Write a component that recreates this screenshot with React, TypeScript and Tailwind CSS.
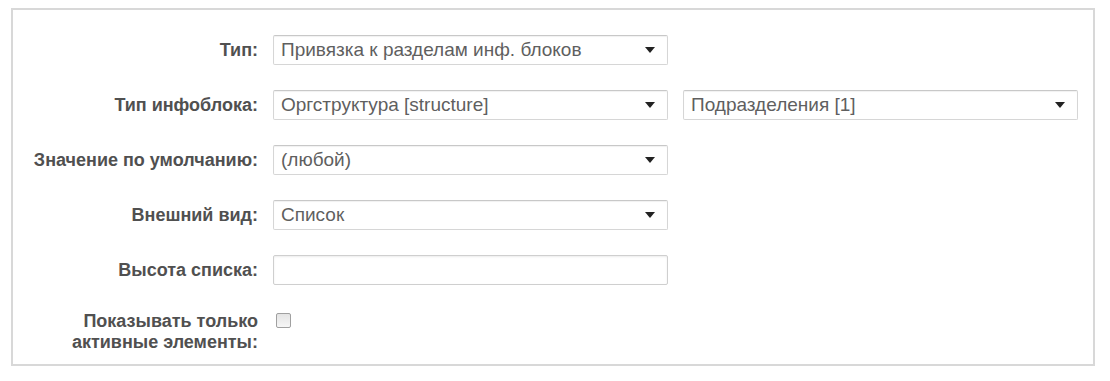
import React from "react";

function Arrow() {
  return (
    <svg width="10" height="6" viewBox="0 0 10 6" className="shrink-0">
      <path d="M0 0 H10 L5 6 Z" fill="#222" />
    </svg>
  );
}

function Select({ value }: { value: string }) {
  return (
    <div className="w-[395px] h-[30px] flex items-center justify-between pl-[7px] pr-[12px] bg-white border border-[#d6d6d6] border-t-[#c8c8c8] rounded-[2px] shadow-[inset_0_1px_1px_rgba(0,0,0,0.06)] text-[19px] text-[#5f5f5f]">
      <span>{value}</span>
      <Arrow />
    </div>
  );
}

function Row({ label, children }: { label: React.ReactNode; children: React.ReactNode }) {
  return (
    <div className="flex items-center h-[30px]">
      <div className="w-[245px] text-right font-bold text-[18px] text-[#505050] leading-[21px] whitespace-nowrap">{label}</div>
      <div className="flex items-center gap-[15px] ml-[15px]">{children}</div>
    </div>
  );
}

export default function App() {
  return (
    <div className="w-[1110px] h-[381px] bg-white pt-[8px] pl-[11px]" style={{ fontFamily: '"Liberation Sans", Arial, sans-serif' }}>
      <div className="w-[1084px] h-[358px] border-2 border-[#d8d8d8] pt-[25px] flex flex-col gap-[25px]">
        <Row label="Тип:">
          <Select value="Привязка к разделам инф. блоков" />
        </Row>
        <Row label="Тип инфоблока:">
          <Select value="Оргструктура [structure]" />
          <Select value="Подразделения [1]" />
        </Row>
        <Row label="Значение по умолчанию:">
          <Select value="(любой)" />
        </Row>
        <Row label="Внешний вид:">
          <Select value="Список" />
        </Row>
        <Row label="Высота списка:">
          <div className="w-[395px] h-[30px] bg-white border border-[#cfcfcf] rounded-[2px] shadow-[inset_0_1px_2px_rgba(0,0,0,0.08)]" />
        </Row>
        <div className="flex items-start mt-[1px]">
          <div className="w-[245px] text-right font-bold text-[18px] text-[#505050] leading-[21px] whitespace-nowrap">
            Показывать только<br />активные элементы:
          </div>
          <div className="ml-[18px] mt-[2px] w-[15px] h-[15px] border border-[#a0a0a0] rounded-[2px] bg-gradient-to-b from-[#e4e4e4] to-[#f6f6f6]" />
        </div>
      </div>
    </div>
  );
}
